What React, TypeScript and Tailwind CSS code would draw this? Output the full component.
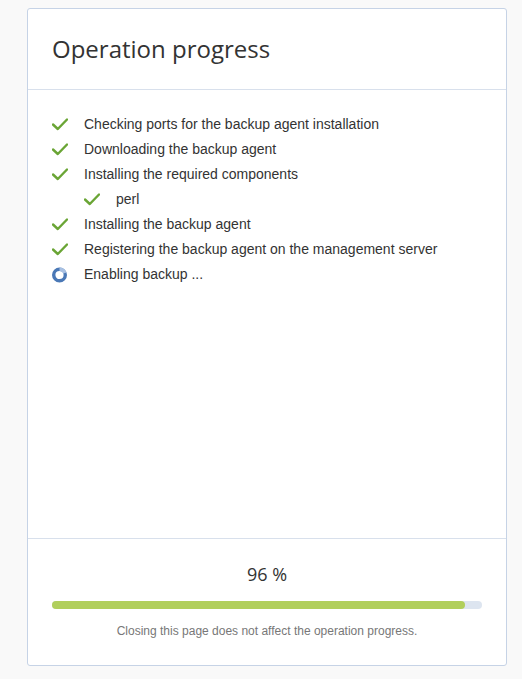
import React from 'react';

interface Step {
  label: string;
  sub?: boolean;
  running?: boolean;
}

const steps: Step[] = [
  { label: 'Checking ports for the backup agent installation' },
  { label: 'Downloading the backup agent' },
  { label: 'Installing the required components' },
  { label: 'perl', sub: true },
  { label: 'Installing the backup agent' },
  { label: 'Registering the backup agent on the management server' },
  { label: 'Enabling backup ...', running: true },
];

const Check = () => (
  <svg width="16" height="13" viewBox="0 0 16 13" fill="none">
    <path d="M1 6.5 L5.8 11 L15 1.5" stroke="#6aa535" strokeWidth="2.4" strokeLinecap="round" strokeLinejoin="round" />
  </svg>
);

const Spinner = () => (
  <svg width="16" height="16" viewBox="0 0 16 16">
    <circle cx="7.5" cy="8" r="5.8" fill="none" stroke="#4a78b6" strokeWidth="3.4" />
    <path d="M7.5 2.2 A5.8 5.8 0 0 1 12.9 6" fill="none" stroke="#a8c0e2" strokeWidth="3.4" />
  </svg>
);

export default function App() {
  const percent = 96;

  return (
    <div className="min-h-[679px] bg-[#f9f9f9] pt-2 pl-[27px]">
      <div className="flex h-[658px] w-[480px] flex-col rounded-[3px] border border-[#c6d3e6] bg-white">
        {/* HEADER */}
        <div className="flex h-[81px] items-center border-b border-[#d8e0ec] px-6">
          <h1 className="font-['Open_Sans',sans-serif] text-[24px] text-[#333]">Operation progress</h1>
        </div>

        {/* STEPS */}
        <div className="flex-1 px-6 pt-[22px] font-['Liberation_Sans',Arial,sans-serif] text-[14px] text-[#333]">
          {steps.map((step) => (
            <div
              key={step.label}
              className={`flex h-[25px] items-center ${step.sub ? 'pl-8' : ''}`}
            >
              <div className="flex w-8 shrink-0 items-center">
                {step.running ? <Spinner /> : <Check />}
              </div>
              <span>{step.label}</span>
            </div>
          ))}
        </div>

        {/* FOOTER */}
        <div className="flex flex-col items-center border-t border-[#d8e0ec] px-6 pt-[23px] pb-[26px]">
          <p className="font-['Open_Sans',sans-serif] text-[18px] leading-[24px] text-[#333]">{percent} %</p>
          <div className="mt-[15px] h-2 w-full rounded-full bg-[#dde5f0]">
            <div className="h-2 rounded-full bg-[#b1cf5c]" style={{ width: `${percent}%` }} />
          </div>
          <p className="mt-[14px] font-['Liberation_Sans',Arial,sans-serif] text-[12px] leading-[16px] text-[#777]">
            Closing this page does not affect the operation progress.
          </p>
        </div>
      </div>
    </div>
  );
}
